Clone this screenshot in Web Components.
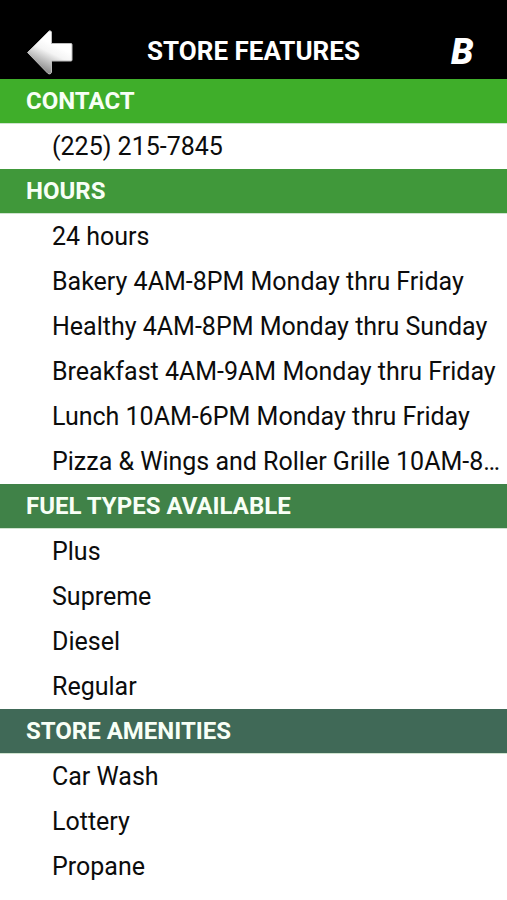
<!DOCTYPE html>
<html lang="en">
<head>
<meta charset="utf-8">
<meta name="viewport" content="width=device-width, initial-scale=1">
<title>Store Features</title>
<style>
  body { margin: 0; background: #fff; color: #0c0c0c; font-family: Roboto, "Liberation Sans", sans-serif; font-size: 25px; line-height: 44px; }
</style>
</head>
<body>
<store-page>
  <top-bar slot="header">Store Features</top-bar>
  <feature-section style="--band: #3fae2a">
    <span slot="title">CONTACT</span>
    <feature-row><a href="tel:+12252157845">(225) 215-7845</a></feature-row>
  </feature-section>
  <feature-section style="--band: #40983a">
    <span slot="title">HOURS</span>
    <feature-row>24 hours</feature-row>
    <feature-row>Bakery 4AM-8PM Monday thru Friday</feature-row>
    <feature-row>Healthy 4AM-8PM Monday thru Sunday</feature-row>
    <feature-row>Breakfast 4AM-9AM Monday thru Friday</feature-row>
    <feature-row>Lunch 10AM-6PM Monday thru Friday</feature-row>
    <feature-row>Pizza &amp; Wings and Roller Grille 10AM-8…</feature-row>
  </feature-section>
  <feature-section style="--band: #408248">
    <span slot="title">FUEL TYPES AVAILABLE</span>
    <feature-row>Plus</feature-row>
    <feature-row>Supreme</feature-row>
    <feature-row>Diesel</feature-row>
    <feature-row>Regular</feature-row>
  </feature-section>
  <feature-section style="--band: #406957">
    <span slot="title">STORE AMENITIES</span>
    <feature-row>Car Wash</feature-row>
    <feature-row>Lottery</feature-row>
    <feature-row>Propane</feature-row>
  </feature-section>
</store-page>

<template id="page-template">
  <style>
    :host { display: block; }
  </style>
  <slot name="header"></slot>
  <main><slot></slot></main>
</template>

<template id="bar-template">
  <style>
    :host { display: block; background: #000; color: #fff; }
    header { display: grid; grid-template-columns: 72px 1fr 72px; align-items: center; padding: 23px 8px 0; }
    button { display: grid; place-items: center start; height: 56px; margin: 0; padding: 0 0 0 18px; border: 0; background: none; color: inherit; }
    .brand { padding: 2px 0 0 24px; font: italic 900 36px/54px Roboto, "Liberation Sans", sans-serif; }
    h1 { margin: 0; text-align: center; text-transform: uppercase; font-size: 26px; font-weight: 700; line-height: 56px; white-space: nowrap; }
    svg { display: block; }
  </style>
  <header>
    <button type="button" aria-label="Back">
      <svg width="48" height="48" viewBox="0 0 48 48" aria-hidden="true">
        <defs>
          <linearGradient id="shine" x1="0.65" y1="0.35" x2="0.35" y2="0.95">
            <stop offset="0" stop-color="#fff"/>
            <stop offset="0.3" stop-color="#f4f4f4"/>
            <stop offset="1" stop-color="#858585"/>
          </linearGradient>
        </defs>
        <path d="M1.500 25.500L23 4Q24.500 3 25.500 5V16.500H45Q46 16.500 46 17.500V33Q46 34 45 34H25.500V45.500Q24.500 48 22 46.500Z" fill="url(#shine)" stroke="#bdbdbd" stroke-width="1" stroke-linejoin="round"/>
      </svg>
    </button>
    <h1><slot></slot></h1>
    <button type="button" class="brand">B</button>
  </header>
</template>

<template id="section-template">
  <style>
    :host { display: block; }
    h2 { margin: 0; padding: 0 26px; border-bottom: 1px solid #cfe3cf; background: var(--band); background-clip: padding-box; color: #f8fff6; font-size: 24px; font-weight: 700; line-height: 44px; }
  </style>
  <section>
    <h2><slot name="title"></slot></h2>
    <div role="list"><slot></slot></div>
  </section>
</template>

<template id="row-template">
  <style>
    :host { display: block; padding: 1px 4px 0 52px; overflow: hidden; text-overflow: ellipsis; white-space: nowrap; }
    ::slotted(a) { color: inherit; text-decoration: none; }
  </style>
  <slot></slot>
</template>

<script>
  class TemplateElement extends HTMLElement {
    constructor() {
      super();
      const template = document.getElementById(this.constructor.template);
      this.attachShadow({ mode: "open" }).append(template.content.cloneNode(true));
    }
  }
  customElements.define("store-page", class extends TemplateElement { static template = "page-template"; });
  customElements.define("top-bar", class extends TemplateElement { static template = "bar-template"; });
  customElements.define("feature-section", class extends TemplateElement { static template = "section-template"; });
  customElements.define("feature-row", class extends TemplateElement {
    static template = "row-template";
    connectedCallback() { this.setAttribute("role", "listitem"); }
  });
</script>
</body>
</html>
